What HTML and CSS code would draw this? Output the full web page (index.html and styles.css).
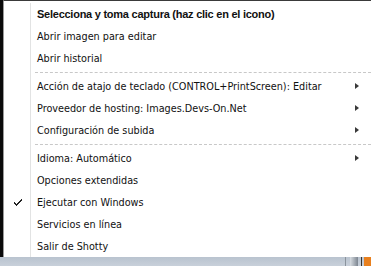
FILE: index.html
```html
<!DOCTYPE html>
<html lang="es">
<head>
<meta charset="utf-8">
<link rel="stylesheet" href="styles.css">
</head>
<body>
<div class="screen">
  <div class="menu">
    <div class="item bold"><span class="gut"></span><span class="label">Selecciona y toma captura (haz clic en el icono)</span></div>
    <div class="item"><span class="gut"></span><span class="label">Abrir imagen para editar</span></div>
    <div class="item"><span class="gut"></span><span class="label">Abrir historial</span></div>
    <div class="sep"><span class="gut"></span><span class="line"></span></div>
    <div class="item"><span class="gut"></span><span class="label">Acción de atajo de teclado (CONTROL+PrintScreen): Editar</span><span class="arrow"></span></div>
    <div class="item"><span class="gut"></span><span class="label">Proveedor de hosting: Images.Devs-On.Net</span><span class="arrow"></span></div>
    <div class="item"><span class="gut"></span><span class="label">Configuración de subida</span><span class="arrow"></span></div>
    <div class="sep"><span class="gut"></span><span class="line"></span></div>
    <div class="item"><span class="gut"></span><span class="label">Idioma: Automático</span><span class="arrow"></span></div>
    <div class="item"><span class="gut"></span><span class="label">Opciones extendidas</span></div>
    <div class="item"><span class="gut"><svg class="check" width="8" height="7" viewBox="0 0 8 7"><path d="M0 3h1v1h1v1h1V4h1V3h1V2h1V1h1V0h1v2H7v1H6v1H5v1H4v1H3v1H2V6H1V5H0z" fill="#222"/></svg></span><span class="label">Ejecutar con Windows</span></div>
    <div class="item"><span class="gut"></span><span class="label">Servicios en línea</span></div>
    <div class="item"><span class="gut"></span><span class="label">Salir de Shotty</span></div>
  </div>
  <div class="taskbar">
    <div class="tray">
      <span class="tray-sep"></span>
      <span class="tray-icon"></span>
      <span class="tray-dark"></span>
      <span class="tray-orange"></span>
    </div>
  </div>
</div>
</body>
</html>
```
FILE: styles.css
```css
html, body {
  margin: 0;
  padding: 0;
  background: #000;
}
.screen {
  width: 371px;
  height: 266px;
  display: flex;
  flex-direction: column;
  overflow: hidden;
  background: #0a0a0a;
}
.menu {
  flex: 1;
  margin-left: 3px;
  border-top: 1px solid #3a3a3a;
  border-left: 1px solid #9a9a9a;
  background: #fff;
  padding-top: 2px;
  font-family: "DejaVu Sans Condensed", "DejaVu Sans", sans-serif;
  font-size: 10.75px;
  color: #111;
}
.item {
  height: 22px;
  display: flex;
  align-items: center;
}
.gut {
  width: 26px;
  height: 100%;
  border-right: 1px solid #e2e3e3;
  box-shadow: 1px 0 0 #fff;
  display: flex;
  align-items: center;
  justify-content: center;
  flex: none;
}
.check {
  display: block;
  margin-left: 2px;
}
.label {
  padding-left: 6px;
  flex: 1;
  white-space: nowrap;
}
.bold .label {
  font-family: "Liberation Sans", Arial, sans-serif;
  font-weight: bold;
  font-size: 11px;
  letter-spacing: -0.25px;
}
.arrow {
  width: 0;
  height: 0;
  border-top: 3.5px solid transparent;
  border-bottom: 3.5px solid transparent;
  border-left: 4px solid #3a3a3a;
  margin-right: 12px;
  flex: none;
}
.sep {
  height: 6px;
  display: flex;
  align-items: center;
}
.sep .line {
  flex: 1;
  margin-left: 4px;
  border-top: 1px dashed #c8c8c8;
}
.taskbar {
  height: 9px;
  flex: none;
  background: linear-gradient(#b9c3cf, #c8d0da);
  display: flex;
  justify-content: flex-end;
}
.tray {
  display: flex;
  align-items: stretch;
}
.tray-sep {
  width: 1px;
  background: #8a939c;
  margin-right: 4px;
}
.tray-icon {
  width: 8px;
  background: linear-gradient(90deg, #d8dde2, #7c8590);
  margin-right: 3px;
}
.tray-dark {
  width: 1px;
  background: #333;
  margin-right: 2px;
}
.tray-orange {
  width: 7px;
  background: #e8801e;
}
```
